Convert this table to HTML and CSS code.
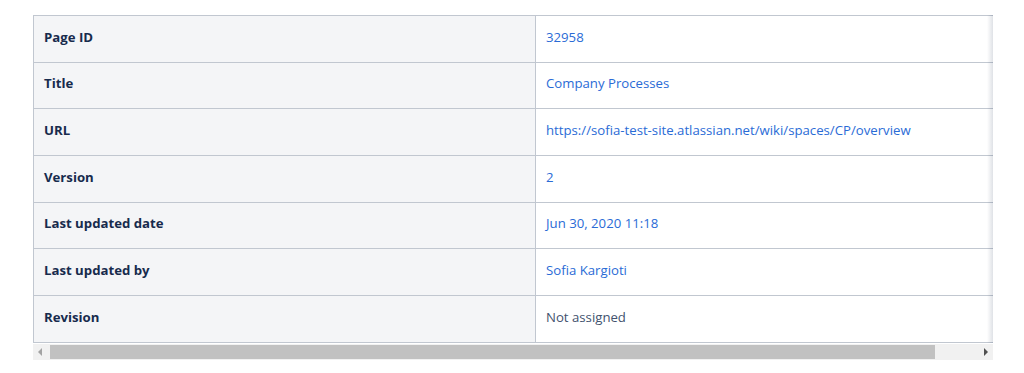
FILE: index.html
```html
<!DOCTYPE html>
<html>
<head>
<meta charset="utf-8">
<link rel="stylesheet" href="styles.css">
</head>
<body>
<div class="wrap">
  <div class="scroller">
    <table class="props">
      <tbody>
        <tr><th>Page ID</th><td><a href="#">32958</a></td></tr>
        <tr class="short"><th>Title</th><td><a href="#">Company Processes</a></td></tr>
        <tr><th>URL</th><td><a href="#">https://sofia-test-site.atlassian.net/wiki/spaces/CP/overview</a></td></tr>
        <tr><th>Version</th><td><a href="#">2</a></td></tr>
        <tr class="short"><th>Last updated date</th><td><a href="#">Jun 30, 2020 11:18</a></td></tr>
        <tr><th>Last updated by</th><td><a href="#">Sofia Kargioti</a></td></tr>
        <tr><th>Revision</th><td class="plain">Not assigned</td></tr>
      </tbody>
    </table>
    <div class="edge-shadow"></div>
  </div>
  <div class="hscroll">
    <span class="arrow left"></span>
    <div class="track"><div class="thumb"></div></div>
    <span class="arrow right"></span>
  </div>
</div>
</body>
</html>
```
FILE: styles.css
```css
html, body {
  margin: 0;
  padding: 0;
  background: #ffffff;
}
body {
  font-family: "Open Sans", "Noto Sans", sans-serif;
  font-size: 13.2px;
  color: #172b4d;
}
.wrap {
  margin: 15px 31px 0 33px;
  width: 960px;
}
.scroller {
  position: relative;
  overflow: hidden;
}
.props {
  border-collapse: collapse;
  width: 1000px;
  table-layout: fixed;
}
.props th, .props td {
  border: 1px solid #c1c7d0;
  height: 47px;
  box-sizing: border-box;
  padding: 0 10px 5px 10px;
  text-align: left;
  vertical-align: middle;
  line-height: 20px;
}
.props tr.short th, .props tr.short td {
  height: 46px;
}
.props th {
  width: 502px;
  background: #f4f5f7;
  font-weight: 700;
  color: #172b4d;
}
.props td {
  background: #ffffff;
}
.props a {
  color: #2a6bd6;
  text-decoration: none;
}
.props td.plain {
  color: #42526e;
}
.edge-shadow {
  position: absolute;
  top: 0;
  right: 0;
  bottom: 0;
  width: 6px;
  background: linear-gradient(to right, rgba(9,30,66,0), rgba(9,30,66,0.13));
}
.hscroll {
  display: flex;
  align-items: center;
  height: 16px;
  margin-top: 1px;
  background: #f1f1f1;
}
.arrow {
  width: 0;
  height: 0;
  border-top: 4px solid transparent;
  border-bottom: 4px solid transparent;
}
.arrow.left {
  border-right: 4px solid #a3a3a3;
  margin: 0 8px 0 5px;
}
.arrow.right {
  border-left: 4px solid #505050;
  margin: 0 5px 0 6px;
}
.track {
  flex: 1;
  height: 100%;
  display: flex;
  align-items: center;
}
.thumb {
  width: 885px;
  height: 14px;
  background: #c1c1c1;
}
```
